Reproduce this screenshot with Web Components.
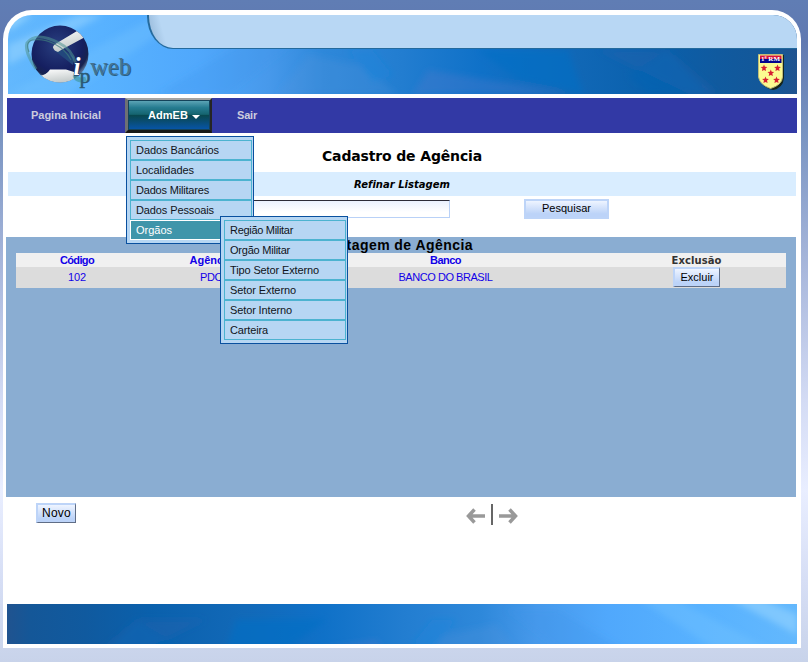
<!DOCTYPE html>
<html lang="pt-BR">
<head>
<meta charset="utf-8">
<title>Cadastro de Agência</title>
<style>
html{background:#c8d3ea}
html,body{margin:0;height:662px;overflow:hidden}
body{box-sizing:border-box;padding-top:10px;font-family:"Liberation Sans",Arial,sans-serif;font-size:11px;color:#000;
background:linear-gradient(#607db4 0,#6079b1 40px,#7893c1 130px,#a9b8dc 270px,#d3dbf4 400px,#e9eeff 490px,#d6def5 580px,#c8d3ea 662px)}
</style>
</head>
<body>
<sip-app></sip-app>
<script>
const define=(name,html,init)=>customElements.define(name,class extends HTMLElement{
  connectedCallback(){
    if(this.shadowRoot)return;
    const t=document.createElement('template');t.innerHTML=html;
    this.attachShadow({mode:'open'}).append(t.content.cloneNode(true));
    if(init)init(this,this.shadowRoot);
  }
});

/* One line of text tracked out to the width given in the w attribute. */
define('sip-text','<style>:host{display:inline-block;white-space:nowrap}span{display:inline-block}</style><span><slot></slot></span>',(el,root)=>{
  const span=root.querySelector('span'),w=+el.getAttribute('w'),n=el.textContent.length;
  const gap=(w-span.getBoundingClientRect().width)/n;
  span.style.letterSpacing=gap.toFixed(3)+'px';
});

/* Blue banner texture shared by the header and the footer. */
define('sip-sky',`<style>:host{display:block;overflow:hidden}svg{display:block;width:100%;height:100%}:host([flip]) svg{transform:scaleX(-1)}</style>
<svg viewBox="0 0 789 79" preserveAspectRatio="xMidYMid slice">
<defs>
<linearGradient id="g" x1="0" y1="0" x2="789" y2="0" gradientUnits="userSpaceOnUse"><stop offset="0" stop-color="#63b8fd"/><stop offset=".12" stop-color="#58b2ff"/><stop offset=".24" stop-color="#50a8fc"/><stop offset=".33" stop-color="#4799eb"/><stop offset=".4" stop-color="#2e88da"/><stop offset=".5" stop-color="#227dd0"/><stop offset=".6" stop-color="#0f71c8"/><stop offset=".7" stop-color="#1269b8"/><stop offset=".82" stop-color="#0a60ac"/><stop offset=".9" stop-color="#105a9f"/><stop offset=".97" stop-color="#145798"/><stop offset="1" stop-color="#20538f"/></linearGradient>
<filter id="b" x="-20%" y="-20%" width="140%" height="140%"><feGaussianBlur stdDeviation="3"/></filter>
</defs>
<rect width="789" height="79" fill="url(#g)"/>
<g filter="url(#b)">
<path d="M0 30L70 0H95L0 50Z" fill="#a5dcff" opacity=".45"/><path d="M0 2L25 0L0 16Z" fill="#9bd9ff" opacity=".7"/>
<path d="M0 79L150 0H180L60 79Z" fill="#79c6ff" opacity=".3"/>
<path d="M150 79L240 25H290L220 79Z" fill="#3c92ea" opacity=".25"/>
<path d="M270 79L300 40L350 50L390 79Z" fill="#5295dc" opacity=".25"/>
<path d="M340 35H365L385 60L365 68Z" fill="#1287de" opacity=".35"/>
<path d="M405 79L420 55L500 68L560 79Z" fill="#4c79cb" opacity=".35"/>
<path d="M470 35H560L575 79L510 65Z" fill="#006ec4" opacity=".6"/>
<path d="M590 35L660 35L710 79H680Z" fill="#2a62ac" opacity=".35"/>
<path d="M660 35L700 79H640L620 60Z" fill="#0064b4" opacity=".5"/>
</g></svg>`);

define('sip-logo',`<style>:host{display:block;width:112px;height:72px}svg{display:block;overflow:visible}</style>
<svg width="112" height="72" viewBox="24 20 112 72">
<defs><radialGradient id="o" cx=".45" cy=".35" r=".62"><stop offset="0" stop-color="#293f80"/><stop offset=".72" stop-color="#151f60"/><stop offset=".9" stop-color="#17224e"/><stop offset="1" stop-color="#536e91"/></radialGradient>
<linearGradient id="w" x2=".3" y2="1"><stop stop-color="#fff"/><stop offset="1" stop-color="#c2c9c9"/></linearGradient><clipPath id="c"><circle cx="60" cy="54" r="28.500"/></clipPath></defs>
<circle cx="60" cy="54" r="28.500" fill="url(#o)"/>
<g clip-path="url(#c)">
<path d="M55 51L64 50L74 57L73 65Z" fill="#22477c"/>
<path d="M53 47.500Q53 45 57 43L82 28L87 36L62 49.500L58 52Q54 51 53 47.500Z" fill="url(#w)"/>
<path d="M38 75.500Q46 76 50 69.500H66L74 72V84H50Z" fill="url(#w)"/>
</g>
<path d="M36 69Q24 51 27 43Q36 31 59 43Q72 49 76 64" fill="none" stroke="#4f9492" stroke-width="3" opacity=".55"/>
<path d="M29 52Q25 41 33 40C47 38 64 46 71 60" fill="none" stroke="#3d7a7c" stroke-width="1.200" opacity=".7"/>
<path d="M75 75Q77 82 86 79" stroke="#3f969c" stroke-width="5" fill="none" opacity=".65"/>
<text x="73.500" y="75" font-family="Liberation Serif" font-size="25" font-weight="bold" font-style="italic" fill="#fff" stroke="#1a2d66" stroke-width="1" paint-order="stroke">i</text>
<text x="79.500" y="82.500" font-family="Liberation Serif" font-size="22" fill="#2b5974" stroke="#2b5974" stroke-width=".5">p</text>
<text x="91" y="75.800" font-family="Liberation Serif" font-size="26" textLength="41" lengthAdjust="spacingAndGlyphs" fill="#25618a">web</text>
<text x="90" y="75" font-family="Liberation Serif" font-size="26" textLength="41" lengthAdjust="spacingAndGlyphs" fill="#447291">web</text>
</svg>`);

define('sip-shield',`<style>:host{display:block;width:27px;height:36px}svg{display:block}</style>
<svg width="27" height="36" viewBox="0 0 27 36"><path d="M2 1H26V24Q25 34 15 36Q4 34 2 24Z" fill="#16251a"/>
<path d="M.5.5H24.500V23Q24 31 12.500 34.500Q2 31 .5 23Z" fill="#fbfa91" stroke="#c0bd79"/>
<path d="M2 1.500H23.500V5H2Z" fill="#d6133f"/><path d="M2 5H23.500V9H2Z" fill="#05058e"/>
<text x="3" y="7.200" font-family="Liberation Serif" font-size="7" font-weight="bold" textLength="19" lengthAdjust="spacingAndGlyphs" fill="#fff">1ª RM</text>
<g fill="#d61d32"><path id="s" d="M6 10.500l.9 2.300 2.500.2-1.900 1.600.6 2.500L6 15.900l-2.100 1.200.6-2.500-1.900-1.600 2.500-.2Z"/><use href="#s" x="13.500"/><use href="#s" x="6.800" y="5"/><use href="#s" x="1.500" y="12"/><use href="#s" x="12.500" y="12"/></g></svg>`);

define('sip-header',`<style>
:host{display:grid;height:79px;border-radius:24px 24px 0 0;overflow:hidden}
sip-sky,.tab,.row{grid-area:1/1}
.tab{height:33px;margin-left:139px;border:solid #246a9d;border-width:0 0 1px 2px;border-bottom-left-radius:26px 33px;background:linear-gradient(75deg,#8fb2d3 0,#b8d7f4 18px);z-index:1}
.row{display:flex;justify-content:space-between;padding:5px 12px 0 16px;z-index:2}
sip-shield{margin-top:34px}
</style><sip-sky></sip-sky><div class="tab"></div><div class="row"><sip-logo></sip-logo><sip-shield></sip-shield></div>`);

define('sip-menu',`<style>:host{display:block;box-sizing:border-box;width:128px;border:1px solid #09509f;padding:3px 1px 3px 3px;background:#b6d6f3}</style><slot></slot>`);
define('sip-menu-item',`<style>:host{display:block;box-sizing:border-box;height:20px;border:1px solid #4cb3d0;padding-left:5px;line-height:18px;font-size:11px}
:host([active]){background:#3f95aa;color:#fff;border-color:#fff}</style><slot></slot>`);

define('sip-nav',`<style>
:host{display:flex;height:35px;background:#3239a5;color:#ccd;font-weight:bold;font-size:11px;line-height:35px;position:relative}
.home{width:94px;padding-left:24px}.out{padding-left:25px}
.on{box-sizing:border-box;width:87px;height:35px;border:2px solid;border-color:#a4a4a4 #252525 #171717 #6e7173;border-width:2px 2px 3px 3px;background:linear-gradient(#64aabb 0,#267c91 25%,#15646f 48%,#08484d 50%,#094c70 70%,#0754a3 95%);color:#fff;line-height:30px;display:flex;align-items:center;padding-left:20px;gap:4px;box-shadow:inset 0 0 0 1px #14435a}
svg{margin-top:4px}
.menu{position:absolute;left:119px;top:38px;font-weight:normal;color:#101420;z-index:5}
.sub{position:absolute;left:213px;top:118px;font-weight:normal;color:#101420;z-index:6}
</style>
<span class="home"><sip-text w="70">Pagina Inicial</sip-text></span>
<span class="on"><sip-text w="40">AdmEB</sip-text><svg width="8" height="4"><path d="M0 0H8L4 4Z" fill="#fff"/></svg></span>
<span class="out"><sip-text w="20">Sair</sip-text></span>
<sip-menu class="menu">
<sip-menu-item><sip-text w="83">Dados Bancários</sip-text></sip-menu-item>
<sip-menu-item><sip-text w="58">Localidades</sip-text></sip-menu-item>
<sip-menu-item><sip-text w="73">Dados Militares</sip-text></sip-menu-item>
<sip-menu-item><sip-text w="78">Dados Pessoais</sip-text></sip-menu-item>
<sip-menu-item active><sip-text w="36">Orgãos</sip-text></sip-menu-item></sip-menu>
<sip-menu class="sub">
<sip-menu-item><sip-text w="63">Região Militar</sip-text></sip-menu-item>
<sip-menu-item><sip-text w="60">Orgão Militar</sip-text></sip-menu-item>
<sip-menu-item><sip-text w="89">Tipo Setor Externo</sip-text></sip-menu-item>
<sip-menu-item><sip-text w="66">Setor Externo</sip-text></sip-menu-item>
<sip-menu-item><sip-text w="62">Setor Interno</sip-text></sip-menu-item>
<sip-menu-item><sip-text w="38">Carteira</sip-text></sip-menu-item></sip-menu>`);

define('sip-button',`<style>:host{display:inline-block}
button{display:block;box-sizing:border-box;width:var(--w);height:var(--h);padding:0 0 1px;margin:0;font:inherit;color:#000;border:2px solid #bdd4f8;background:linear-gradient(#eef4ff,#bcd3f8 80%);line-height:1}
:host([raised]) button{border-right:1px solid #5f6d86;border-bottom:1px solid #5f6d86}
</style><button><slot></slot></button>`);

define('sip-search',`<style>:host{display:block}
h1{margin:0;height:39px;text-align:center;font:bold 14px/46px "DejaVu Sans",Verdana,sans-serif}
.bar{height:24px;margin:0 1px;background:#d9edff;text-align:center;font:italic bold 10px/25px "DejaVu Sans",Verdana,sans-serif}
.row{display:flex;height:41px;align-items:flex-start;padding:3px 0 0 133px;box-sizing:border-box}
input{box-sizing:border-box;width:310px;height:18px;margin:1px 74px 0 0;border:1px solid #b9d1f7;border-top-color:#2b2b38;background:linear-gradient(#eaf1fe,#fff 70%);padding:0}
sip-button{--w:85px;--h:20px}
</style>
<h1><sip-text w="160">Cadastro de Agência</sip-text></h1>
<div class="bar"><sip-text w="96">Refinar Listagem</sip-text></div>
<div class="row"><input aria-label="Agência"><sip-button><sip-text w="49">Pesquisar</sip-text></sip-button></div>`);

define('sip-list',`<style>:host{display:block;box-sizing:border-box;height:260px;margin:0 1px 0 -1px;background:#8aadd2;padding:0 10px}
h2{margin:0;height:16px;font:bold 14px/17px "Liberation Sans",Arial,sans-serif;text-align:center;padding-right:4px}
.g{display:grid;grid-template-columns:122px 146px 323px 1fr;text-align:center;color:#1200e8}
.h{height:14px;line-height:15px;background:#f0f0f0;font-weight:bold}
.r{height:21px;line-height:21px;background:#dcdcdc}
.x{color:#333;font:bold 10px/15px "DejaVu Sans",Verdana,sans-serif}
.b{color:#000;line-height:0}
sip-button{--w:47px;--h:20px}
</style>
<h2><sip-text w="148">Listagem de Agência</sip-text></h2>
<div class="g h"><span><sip-text w="34">Código</sip-text></span><span><sip-text w="43">Agência</sip-text></span><span><sip-text w="31">Banco</sip-text></span><span class="x"><sip-text w="50">Exclusão</sip-text></span></div>
<div class="g r"><span><sip-text w="18">102</sip-text></span><span><sip-text w="22">PDC</sip-text></span><span><sip-text w="94">BANCO DO BRASIL</sip-text></span><span class="b"><sip-button raised><sip-text w="33">Excluir</sip-text></sip-button></span></div>`);

define('sip-pager',`<style>:host{display:flex;align-items:flex-start;height:107px;box-sizing:border-box;padding:6px 0 0 29px}
sip-button{--w:40px;--h:20px;font-size:12px;margin-right:389px}svg{display:block;margin-top:1px}</style>
<sip-button raised><sip-text w="29">Novo</sip-text></sip-button>
<svg width="55" height="21" viewBox="0 0 55 21"><g fill="none" stroke="#999" stroke-width="3.500"><path d="M2.500 12H20M9.500 5.500L3.500 12L9.500 18.500"/><path d="M34 12H51.500M44.500 5.500L50.500 12L44.500 18.500"/></g><path d="M26 0H28V21H26Z" fill="#666"/></svg>`);

define('sip-app',`<style>:host{display:block;box-sizing:border-box;width:798px;height:638px;margin:0 0 0 3px;border-radius:29px 29px 0 0;background:#fff;padding:5px 4px 4px}
sip-header{margin:0 0 4px 1px;width:789px}
sip-sky{height:40px}
</style>
<sip-header></sip-header><sip-nav></sip-nav><sip-search></sip-search><sip-list></sip-list><sip-pager></sip-pager><sip-sky flip></sip-sky>`);
</script>
</body>
</html>
